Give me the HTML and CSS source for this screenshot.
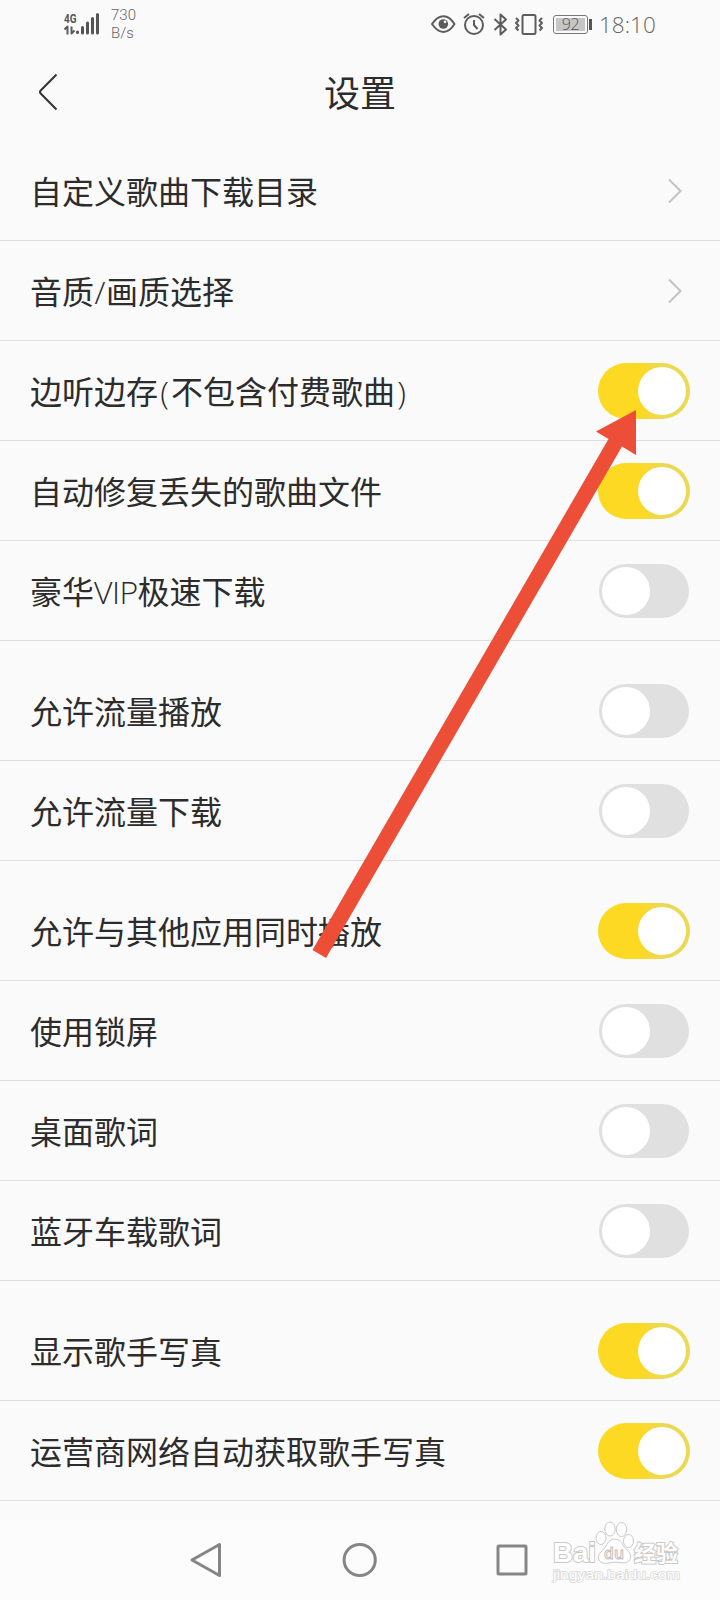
FILE: index.html
```html
<!DOCTYPE html>
<html lang="zh-CN">
<head>
<meta charset="utf-8">
<title>设置</title>
<link rel="stylesheet" href="styles.css">
</head>
<body>
<div class="screen">
  <header class="status">
    <div class="signal">
      <svg width="36" height="24" viewBox="0 0 36 24">
        <text class="net" x="0" y="10.5" textLength="12.5" lengthAdjust="spacingAndGlyphs">4G</text>
        <path class="ink" d="M0.500 17.500l3-3V22.500M7.500 14.500V21.500l3-3"/>
        <path class="bars" d="M13.500 20v.5M18.500 15.500v5.500M23.500 11v10M28.500 6.500v14.500M33.500 2.500v18.500"/>
      </svg>
      <div class="speed"><span>730</span><span>B/s</span></div>
    </div>
    <div class="indicators">
      <svg width="113" height="24" viewBox="0 0 113 24">
        <g class="ink">
          <path d="M1 12C8 1.500 17 1.500 23.500 12C17 22.500 8 22.500 1 12Z"/>
          <circle cx="43" cy="13" r="9"/>
          <path d="M43 8v5l3.500 4M33 6l5-4M53 6l-5-4"/>
          <path d="M63.500 7L75 17.500L69.500 22.500V2.500L75 7.500L63.500 18"/>
          <rect x="91.500" y="3" width="13" height="19" rx="1.500"/>
          <path d="M85 6l2.500 2.500-2.500 2.500 2.500 2.500-2.500 2.500 2.500 2.500M111 6l-2.500 2.500 2.500 2.500-2.500 2.500 2.500 2.500-2.500 2.500"/>
        </g>
        <circle class="pupil" cx="12.300" cy="12" r="4.800"/>
        <circle class="glint" cx="14" cy="9.800" r="1.400"/>
      </svg>
      <div class="battery"><span class="level">92</span></div>
      <time class="clock">18:10</time>
    </div>
  </header>
  <div class="titlebar">
    <svg class="back" width="22" height="40" viewBox="0 0 22 40"><path d="M18.500 1.500L2.700 17.500Q1.200 19 2.700 20.500L18.500 36.500"/></svg>
    <h1>设置</h1>
  </div>
  <main class="list">
    <section class="group">
      <div class="row"><span>自定义歌曲下载目录</span><svg class="chevron" width="14" height="26" viewBox="0 0 14 26"><path d="M1 1.500L12.500 13L1 24.500"/></svg></div>
      <div class="row"><span>音质<i class="latin slash">/</i>画质选择</span><svg class="chevron" width="14" height="26" viewBox="0 0 14 26"><path d="M1 1.500L12.500 13L1 24.500"/></svg></div>
      <div class="row"><span>边听边存<i class="latin paren">(</i>不包含付费歌曲<i class="latin paren">)</i></span><b class="toggle on"></b></div>
      <div class="row"><span>自动修复丢失的歌曲文件</span><b class="toggle on"></b></div>
      <div class="row"><span>豪华<i class="latin vip">VIP</i>极速下载</span><b class="toggle"></b></div>
    </section>
    <section class="group">
      <div class="row"><span>允许流量播放</span><b class="toggle"></b></div>
      <div class="row"><span>允许流量下载</span><b class="toggle"></b></div>
    </section>
    <section class="group">
      <div class="row"><span>允许与其他应用同时播放</span><b class="toggle on"></b></div>
      <div class="row"><span>使用锁屏</span><b class="toggle"></b></div>
      <div class="row"><span>桌面歌词</span><b class="toggle"></b></div>
      <div class="row"><span>蓝牙车载歌词</span><b class="toggle"></b></div>
    </section>
    <section class="group">
      <div class="row"><span>显示歌手写真</span><b class="toggle on"></b></div>
      <div class="row"><span>运营商网络自动获取歌手写真</span><b class="toggle on"></b></div>
    </section>
  </main>
  <nav class="nav">
    <svg width="36" height="36" viewBox="0 0 36 36"><path d="M31.500 2.500V33.500L4 18Z"/></svg>
    <svg width="36" height="36" viewBox="0 0 36 36"><circle cx="18.700" cy="18" r="15.600"/></svg>
    <svg width="36" height="36" viewBox="0 0 36 36"><rect x="4" y="4" width="28" height="28" rx="1"/></svg>
  </nav>
  <svg class="watermark" width="140" height="70" viewBox="0 0 140 70">
    <text class="brand" x="4" y="42.5" textLength="43" lengthAdjust="spacingAndGlyphs">Bai</text>
    <g class="paw">
      <ellipse cx="52" cy="19" rx="5" ry="6.500"/>
      <ellipse cx="61" cy="10" rx="5.200" ry="7"/>
      <ellipse cx="72.500" cy="10.500" rx="5.200" ry="7"/>
      <ellipse cx="79.500" cy="22" rx="5" ry="6.500"/>
      <path d="M49.500 39C49 34 54 32 57 27C61 18 70 18 74 26C77 31 83 34 81.500 39C80 44 75 44.500 71 43.500Q65 42.500 60 44C55 45 50 44 49.500 39Z"/>
    </g>
    <text class="du" x="55" y="40" textLength="20" lengthAdjust="spacingAndGlyphs">du</text>
    <text class="brand cjk" x="85" y="42" textLength="44" lengthAdjust="spacingAndGlyphs">经验</text>
    <text class="site" x="4" y="60" textLength="127" lengthAdjust="spacingAndGlyphs">jingyan.baidu.com</text>
  </svg>
  <svg class="pointer" width="330" height="552" viewBox="0 0 330 552"><path d="M326 2V47L312 38.500L16 550L2.500 542L298.500 31L286 23.500Z"/></svg>
</div>
</body>
</html>
```
FILE: styles.css
```css
* { box-sizing: border-box; }
body { margin: 0; background: #fafafa; color: #2c2c2c; font-family: "Noto Sans CJK SC", sans-serif; }
svg { display: block; flex: none; }
.screen { position: relative; display: flex; flex-direction: column; width: 720px; height: 1600px; overflow: hidden; }

.status { display: flex; justify-content: space-between; height: 48px; padding: 0 64px; color: #666; font-family: "Open Sans", sans-serif; font-weight: 300; }
.signal { display: flex; gap: 11px; padding-top: 12px; }
.net { font: 700 12px Roboto, sans-serif; fill: #555; }
.ink { fill: none; stroke: #5c5c5c; stroke-width: 2; stroke-linejoin: round; }
.bars { fill: none; stroke: #555; stroke-width: 3; stroke-linecap: round; }
.speed { display: flex; flex-direction: column; margin-top: -6px; font: 300 15px/18px Roboto, sans-serif; }
.indicators { display: flex; align-items: center; }
.pupil { fill: #5c5c5c; }
.glint { fill: #fafafa; }
.battery { position: relative; width: 35px; height: 19px; margin-left: 9px; padding: 2px; border: 1.500px solid #777; border-radius: 3px; }
.battery::after { content: ""; position: absolute; right: -5px; top: 3px; width: 3px; height: 11px; background: #555; }
.level { display: block; height: 100%; background: #c6c6c6; color: #555; font-size: 16px; font-weight: 300; line-height: 13px; text-align: center; letter-spacing: -.3px; }
.clock { width: 57px; margin-left: 11px; padding-top: 1px; font-size: 22.500px; line-height: 28px; white-space: nowrap; }

.titlebar { display: grid; grid-template-columns: 40px 1fr 40px; align-items: center; height: 93px; padding: 0 38px 4px; }
.back { fill: none; stroke: #333; stroke-width: 2; }
h1 { margin: 0; padding-bottom: 4px; font-size: 36px; font-weight: 400; line-height: 50px; text-align: center; }

.list { display: flex; flex-direction: column; gap: 20px; height: 1379px; }
.row { display: flex; align-items: center; justify-content: space-between; height: 100px; padding: 0 30px; border-bottom: 1px solid #dedede; font-size: 32px; line-height: 48px; white-space: nowrap; }
.row > span { padding-bottom: 2px; }
.latin { display: inline-block; font-family: "Open Sans", sans-serif; font-style: normal; font-weight: 300; line-height: 40px; text-align: center; }
.paren { width: 13px; }
.slash { width: 12px; }
.vip { width: 43.500px; letter-spacing: -.5px; }
.chevron { margin-right: 8px; fill: none; stroke: #c2c2c2; stroke-width: 2; }
.toggle { display: flex; width: 90px; height: 54px; margin-right: 1px; padding: 3px; border-radius: 27px; background: #e0e0e0; }
.toggle::before { content: ""; width: 48px; height: 48px; border-radius: 50%; background: #fff; }
.toggle.on { width: 92px; height: 56px; margin-right: 0; padding: 4px; justify-content: flex-end; border-radius: 28px; background: linear-gradient(90deg, #fdd923 45%, #ecd953 70%); }

.nav { display: flex; justify-content: space-between; align-items: center; height: 80px; padding: 0 190px 0 188px; background: #fcfcfc; fill: none; stroke: #858585; stroke-width: 3; stroke-linejoin: round; }

.watermark { position: absolute; left: 549px; top: 1519px; fill: #fff; stroke: #c9c9c9; stroke-width: 1; }
.brand { font: 700 28px "Liberation Sans", sans-serif; paint-order: stroke; stroke-width: 2; }
.cjk { font: 700 22px "Noto Sans CJK SC", sans-serif; }
.du { font: 600 17px "Open Sans", sans-serif; fill: #fff; stroke: #c0c0c0; stroke-width: 1; }
.site { font: 400 13.500px "Liberation Sans", sans-serif; paint-order: stroke; stroke: #d9d9d9; stroke-width: 1.500; }
.pointer { position: absolute; left: 310px; top: 408px; fill: #ec4e37; }
```
